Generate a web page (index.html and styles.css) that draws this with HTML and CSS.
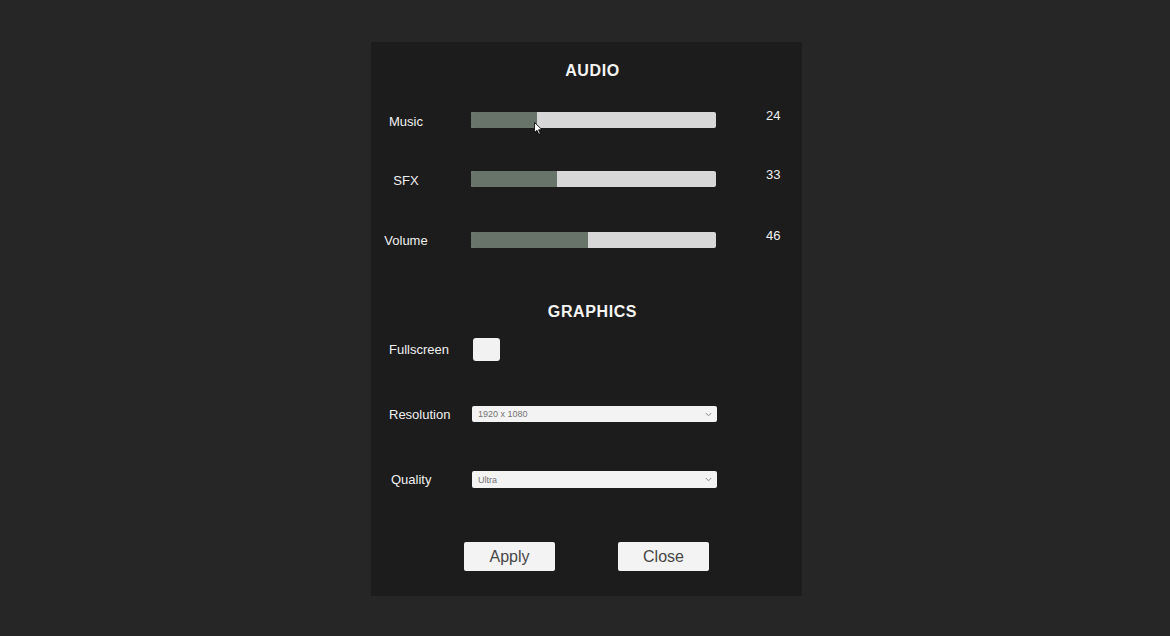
FILE: index.html
```html
<!DOCTYPE html>
<html>
<head>
<meta charset="utf-8">
<link rel="stylesheet" href="styles.css">
</head>
<body>
<div class="panel">
  <div class="title title-audio">AUDIO</div>

  <div class="row row-music">
    <div class="label label-audio">Music</div>
    <div class="slider"><div class="fill" style="width:66px"></div></div>
    <div class="value">24</div>
    <svg class="cursor" width="9" height="13" viewBox="0 0 9 13"><path d="M0.5 0.5 L0.5 10.5 L3 8.3 L4.8 12.3 L6.3 11.6 L4.6 7.8 L8 7.8 Z" fill="#fff" stroke="#000" stroke-width="0.8"/></svg>
  </div>

  <div class="row row-sfx">
    <div class="label label-audio">SFX</div>
    <div class="slider"><div class="fill" style="width:86px"></div></div>
    <div class="value">33</div>
  </div>

  <div class="row row-volume">
    <div class="label label-audio">Volume</div>
    <div class="slider"><div class="fill" style="width:117px"></div></div>
    <div class="value">46</div>
  </div>

  <div class="title title-graphics">GRAPHICS</div>

  <div class="row row-fullscreen">
    <div class="label label-gfx">Fullscreen</div>
    <div class="checkbox"></div>
  </div>

  <div class="row row-resolution">
    <div class="label label-gfx">Resolution</div>
    <div class="dropdown"><span>1920 x 1080</span>
      <svg class="chev" width="7" height="5" viewBox="0 0 7 5"><path d="M0.8 1 L3.5 3.8 L6.2 1" fill="none" stroke="#8a8a8a" stroke-width="1"/></svg>
    </div>
  </div>

  <div class="row row-quality">
    <div class="label label-gfx label-quality">Quality</div>
    <div class="dropdown"><span>Ultra</span>
      <svg class="chev" width="7" height="5" viewBox="0 0 7 5"><path d="M0.8 1 L3.5 3.8 L6.2 1" fill="none" stroke="#8a8a8a" stroke-width="1"/></svg>
    </div>
  </div>

  <div class="buttons">
    <button class="btn">Apply</button>
    <button class="btn">Close</button>
  </div>
</div>
</body>
</html>
```

FILE: styles.css
```css
html, body {
  margin: 0;
  padding: 0;
  background: #262626;
  width: 1170px;
  height: 636px;
  overflow: hidden;
  font-family: "Liberation Sans", Arial, sans-serif;
}

.panel {
  margin: 42px 0 0 371px;
  width: 431px;
  height: 554px;
  background: #1c1c1c;
  display: flex;
  flex-direction: column;
  box-sizing: border-box;
  padding-top: 19px;
}

.title {
  height: 20px;
  line-height: 20px;
  text-align: center;
  color: #f4f4f4;
  font-weight: bold;
  font-size: 16px;
  letter-spacing: 0.6px;
  padding-left: 12px;
}

.title-audio { margin-bottom: -1px; }
.title-graphics { margin-top: 54px; margin-bottom: -1px; }

.row {
  display: flex;
  align-items: center;
  position: relative;
}

.row-music { margin-top: 32px; height: 16px; }
.row-sfx { margin-top: 43px; height: 16px; }
.row-volume { margin-top: 45px; height: 16px; }
.row-fullscreen { margin-top: 17px; height: 23px; }
.row-resolution { margin-top: 45px; height: 16px; }
.row-quality { margin-top: 49px; height: 17px; }

.label {
  color: #f0f0f0;
  font-size: 13px;
  line-height: 16px;
}

.label-audio {
  width: 70px;
  margin-right: 30px;
  text-align: center;
}
.row-music .label-audio, .row-sfx .label-audio { margin-top: 3px; }
.row-volume .label-audio { margin-top: 2px; }

.label-gfx {
  width: 83px;
  padding-left: 18px;
}
.row-fullscreen .label-gfx { width: 84px; margin-top: 1px; }
.row-resolution .label-gfx, .row-quality .label-gfx { margin-top: 1px; }
.label-quality { padding-left: 20px; width: 81px; }

.slider {
  width: 245px;
  height: 16px;
  background: #d7d7d7;
  border-radius: 2px;
  overflow: hidden;
}

.fill {
  height: 100%;
  background: #687469;
}

.value {
  margin-left: 50px;
  color: #f0f0f0;
  font-size: 13px;
  line-height: 16px;
  align-self: flex-start;
  margin-top: -4px;
}

.cursor {
  position: absolute;
  left: 163px;
  top: 10px;
}

.checkbox {
  width: 27px;
  height: 23px;
  background: #f2f2f2;
  border-radius: 3px;
}

.dropdown {
  width: 245px;
  height: 100%;
  box-sizing: border-box;
  background: #f3f3f3;
  border-radius: 2px;
  display: flex;
  align-items: center;
  justify-content: space-between;
  padding: 0 5px 0 6px;
  color: #737373;
  font-size: 9px;
}

.chev { display: block; }

.buttons {
  margin-top: 54px;
  display: flex;
  gap: 63px;
  padding-left: 93px;
}

.btn {
  width: 91px;
  height: 29px;
  background: #f3f3f3;
  border: none;
  border-radius: 2px;
  color: #474747;
  font-family: "Liberation Sans", Arial, sans-serif;
  font-size: 16px;
  padding: 0;
}
```
